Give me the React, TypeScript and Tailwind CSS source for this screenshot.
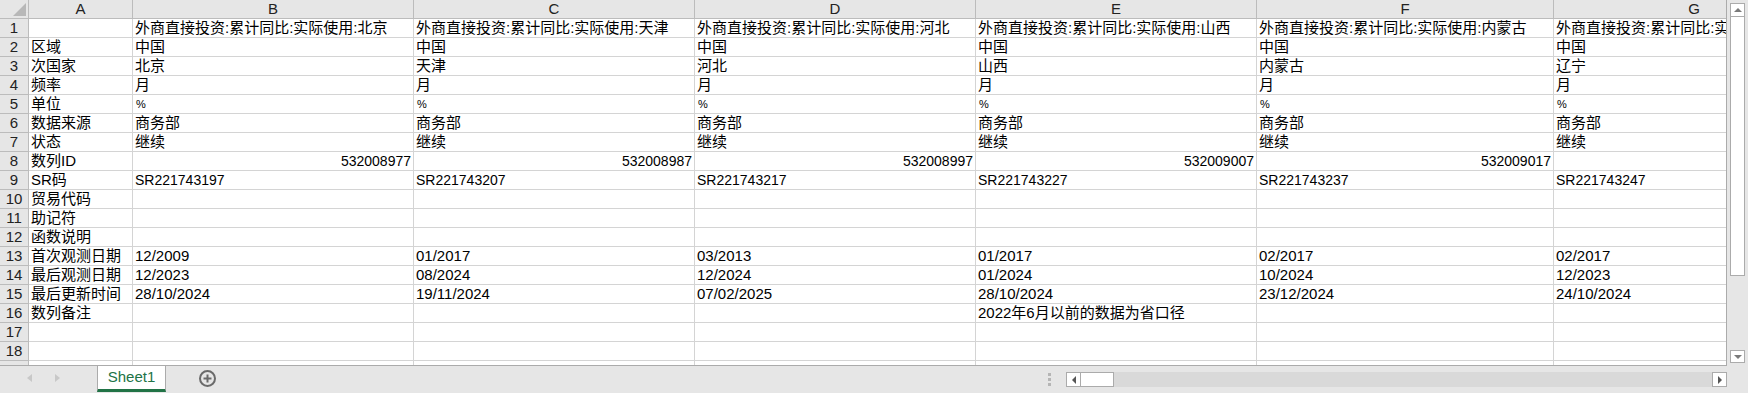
const COLS = [
  { key: "A", w: "w-[104px]" },
  { key: "B", w: "w-[281px]" },
  { key: "C", w: "w-[281px]" },
  { key: "D", w: "w-[281px]" },
  { key: "E", w: "w-[281px]" },
  { key: "F", w: "w-[297px]" },
  { key: "G", w: "w-[281px]" },
];

const PLACES = ["北京", "天津", "河北", "山西", "内蒙古", "辽宁"];
const IDS = ["532008977", "532008987", "532008997", "532009007", "532009017", "532009027"];
const SR = ["SR221743197", "SR221743207", "SR221743217", "SR221743227", "SR221743237", "SR221743247"];
const FIRST = ["12/2009", "01/2017", "03/2013", "01/2017", "02/2017", "02/2017"];
const LAST = ["12/2023", "08/2024", "12/2024", "01/2024", "10/2024", "12/2023"];
const UPDATED = ["28/10/2024", "19/11/2024", "07/02/2025", "28/10/2024", "23/12/2024", "24/10/2024"];

type Cell = { text?: string; kind?: "cjk" | "num" | "date" | "pct" | "right" };

const fill = (list: string[], kind: Cell["kind"]): Cell[] => list.map((text) => ({ text, kind }));
const same = (text: string, kind: Cell["kind"] = "cjk"): Cell[] => PLACES.map(() => ({ text, kind }));
const empty = (): Cell[] => PLACES.map(() => ({}));

const ROWS: Cell[][] = [
  [{}, ...PLACES.map((p) => ({ text: `外商直接投资:累计同比:实际使用:${p}`, kind: "cjk" as const }))],
  [{ text: "区域" }, ...same("中国")],
  [{ text: "次国家" }, ...fill(PLACES, "cjk")],
  [{ text: "频率" }, ...same("月")],
  [{ text: "单位" }, ...same("%", "pct")],
  [{ text: "数据来源" }, ...same("商务部")],
  [{ text: "状态" }, ...same("继续")],
  [{ text: "数列ID" }, ...fill(IDS, "right")],
  [{ text: "SR码" }, ...fill(SR, "num")],
  [{ text: "贸易代码" }, ...empty()],
  [{ text: "助记符" }, ...empty()],
  [{ text: "函数说明" }, ...empty()],
  [{ text: "首次观测日期" }, ...fill(FIRST, "date")],
  [{ text: "最后观测日期" }, ...fill(LAST, "date")],
  [{ text: "最后更新时间" }, ...fill(UPDATED, "date")],
  [{ text: "数列备注" }, {}, {}, {}, { text: "2022年6月以前的数据为省口径" }, {}, {}],
  [{}, ...empty()],
  [{}, ...empty()],
  [{}, ...empty()],
];

function cellClass(kind: Cell["kind"]) {
  switch (kind) {
    case "right":
      return "justify-end pr-[2px] text-[14px]";
    case "num":
      return "pl-[2px] text-[14px]";
    case "date":
      return "pl-[2px] text-[15px]";
    case "pct":
      return "pl-[3px] text-[11px] text-[#444]";
    default:
      return "pl-[2px] text-[15px]";
  }
}

function Grid() {
  return (
    <div className="w-[1727px] h-[366px] overflow-hidden border-r border-b border-[#ababab] bg-white">
      <div className="flex h-[19px] w-max bg-[#e6e6e6]">
        <div className="w-[29px] h-[19px] shrink-0 border-r border-b border-[#bcbcbc] relative">
          <div className="absolute right-[2px] bottom-[2px] w-0 h-0 border-l-[13px] border-l-transparent border-b-[13px] border-b-[#b8b8b8]" />
        </div>
        {COLS.map((c) => (
          <div
            key={c.key}
            className={`${c.w} h-[19px] shrink-0 border-r border-b border-[#bcbcbc] flex items-center justify-center text-[15px] text-[#222] leading-[18px]`}
          >
            {c.key}
          </div>
        ))}
      </div>
      {ROWS.map((row, r) => (
        <div key={r} className="flex h-[19px] w-max">
          <div className="w-[29px] h-[19px] shrink-0 bg-[#e6e6e6] border-r border-b border-[#bcbcbc] flex items-end justify-center text-[15px] text-[#222] leading-[18px]">
            {r + 1}
          </div>
          {COLS.map((c, i) => {
            const cell = row[i] ?? {};
            return (
              <div
                key={c.key}
                className={`${c.w} h-[19px] shrink-0 border-r border-b border-[#d4d4d4] flex items-end whitespace-nowrap overflow-hidden leading-[18px] text-black ${cellClass(cell.kind)}`}
              >
                {cell.text}
              </div>
            );
          })}
        </div>
      ))}
    </div>
  );
}

function VScroll() {
  return (
    <div className="w-[21px] h-[366px] bg-[#e6e6e6] flex flex-col items-center pt-[3px]">
      <div className="w-[15px] h-[14px] bg-white border border-[#ababab] flex items-center justify-center">
        <div className="w-0 h-0 border-l-[4px] border-r-[4px] border-b-[4px] border-l-transparent border-r-transparent border-b-[#7a7a7a]" />
      </div>
      <div className="w-[15px] h-[259px] bg-white border border-t-0 border-[#ababab]" />
      <div className="flex-1" />
      <div className="w-[15px] h-[13px] mb-[3px] bg-white border border-[#ababab] flex items-center justify-center">
        <div className="w-0 h-0 border-l-[4px] border-r-[4px] border-t-[4px] border-l-transparent border-r-transparent border-t-[#7a7a7a]" />
      </div>
    </div>
  );
}

function TabBar() {
  return (
    <div className="h-[27px] bg-[#e6e6e6] flex items-start relative">
      <div className="flex items-center h-[24px] pl-[27px] gap-[23px] text-[#c4c4c4]">
        <div className="w-0 h-0 border-t-[4px] border-b-[4px] border-r-[5px] border-t-transparent border-b-transparent border-r-[#c8c8c8]" />
        <div className="w-0 h-0 border-t-[4px] border-b-[4px] border-l-[5px] border-t-transparent border-b-transparent border-l-[#c8c8c8]" />
      </div>
      <div className="ml-[37px] w-[69px] h-[26px] bg-white border-x border-[#ababab] border-b-[3px] border-b-[#217346] flex items-center justify-center text-[15px] text-[#217346] font-['Liberation_Sans','Noto_Sans_CJK_SC',sans-serif]">
        Sheet1
      </div>
      <div className="ml-[33px] mt-[4px] w-[17px] h-[17px] rounded-full border-2 border-[#6a6a6a] flex items-center justify-center text-[#6a6a6a]">
        <svg width="9" height="9" viewBox="0 0 9 9">
          <path d="M4.5 0.5v8M0.5 4.5h8" stroke="#6a6a6a" strokeWidth="2" />
        </svg>
      </div>
      <div className="absolute left-[1048px] top-[7px] flex flex-col gap-[2px]">
        <div className="w-[3px] h-[3px] bg-[#b5b5b5]" />
        <div className="w-[3px] h-[3px] bg-[#b5b5b5]" />
        <div className="w-[3px] h-[3px] bg-[#b5b5b5]" />
      </div>
      <div className="absolute left-[1066px] top-[6px] w-[661px] h-[15px] bg-[#d9d9d9] flex">
        <div className="w-[15px] h-[15px] bg-white border border-[#ababab] flex items-center justify-center">
          <div className="w-0 h-0 border-t-[4px] border-b-[4px] border-r-[4px] border-t-transparent border-b-transparent border-r-[#555]" />
        </div>
        <div className="w-[33px] h-[15px] bg-white border border-l-0 border-[#ababab]" />
        <div className="flex-1" />
        <div className="w-[15px] h-[15px] bg-white border border-[#ababab] flex items-center justify-center">
          <div className="w-0 h-0 border-t-[4px] border-b-[4px] border-l-[4px] border-t-transparent border-b-transparent border-l-[#555]" />
        </div>
      </div>
    </div>
  );
}

export default function App() {
  return (
    <div className="w-[1748px] h-[393px] overflow-hidden bg-[#e6e6e6] font-['Liberation_Sans','Noto_Sans_CJK_SC',sans-serif]">
      <div className="flex">
        <Grid />
        <VScroll />
      </div>
      <TabBar />
    </div>
  );
}
